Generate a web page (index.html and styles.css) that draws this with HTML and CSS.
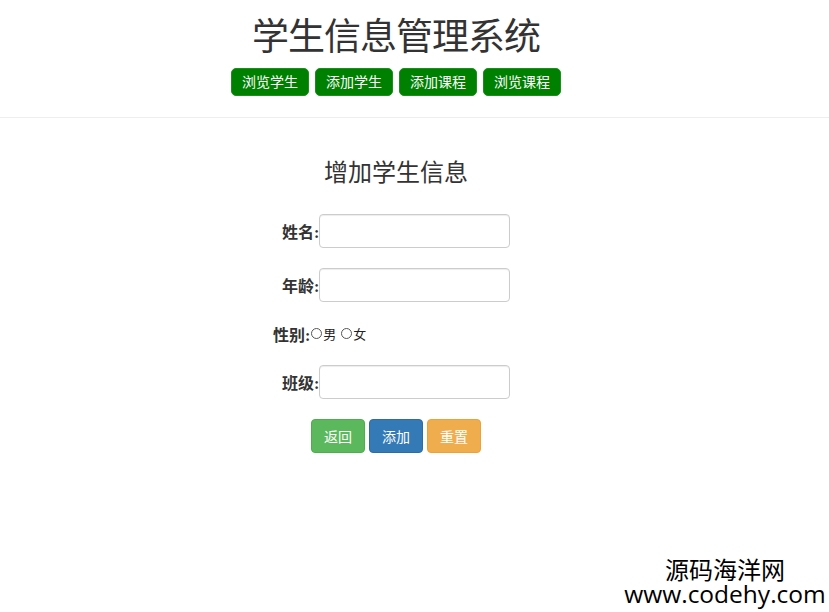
FILE: index.html
```html
<!DOCTYPE html>
<html lang="zh">
<head>
<meta charset="utf-8">
<title>学生信息管理系统</title>
<link rel="stylesheet" href="styles.css">
</head>
<body>
<header class="header">
  <div class="wrap">
    <h1 class="site-title">学生信息管理系统</h1>
    <nav class="nav">
      <a class="nav-btn" href="#">浏览学生</a>
      <a class="nav-btn" href="#">添加学生</a>
      <a class="nav-btn" href="#">添加课程</a>
      <a class="nav-btn" href="#">浏览课程</a>
    </nav>
  </div>
</header>
<main class="wrap">
  <h2 class="form-title">增加学生信息</h2>
  <form class="form">
    <div class="row row-input"><label class="lbl">姓名:</label><input class="field" type="text"></div>
    <div class="row row-input"><label class="lbl">年龄:</label><input class="field" type="text"></div>
    <div class="row row-gender"><label class="lbl">性别:</label><span class="radio"></span><span class="opt">男</span><span class="radio radio-2"></span><span class="opt">女</span></div>
    <div class="row row-input"><label class="lbl">班级:</label><input class="field" type="text"></div>
    <div class="actions">
      <button type="button" class="btn btn-green">返回</button>
      <button type="button" class="btn btn-blue">添加</button>
      <button type="button" class="btn btn-orange">重置</button>
    </div>
  </form>
</main>
<div class="watermark">
  <div class="wm-cn">源码海洋网</div>
  <div class="wm-url">www.codehy.com</div>
</div>
</body>
</html>
```
FILE: styles.css
```css
html, body {
  margin: 0;
  padding: 0;
  background: #fff;
}
body {
  font-family: "Liberation Sans", "Noto Sans CJK SC", sans-serif;
  color: #333;
  width: 829px;
  height: 612px;
  position: relative;
  overflow: hidden;
}
.wrap {
  width: 792px;
}
.header {
  border-bottom: 1px solid #eee;
  padding-bottom: 21px;
}
.site-title {
  margin: 16px 0 0;
  font-size: 37px;
  font-weight: 400;
  line-height: 44px;
  text-align: center;
  color: #333;
  letter-spacing: -1px;
}
.nav {
  display: flex;
  justify-content: center;
  gap: 6px;
  margin-top: 8px;
}
.nav-btn {
  display: block;
  width: 78px;
  height: 28px;
  line-height: 26px;
  box-sizing: border-box;
  background: #008000;
  color: #fff;
  text-decoration: none;
  font-size: 14px;
  text-align: center;
  border-radius: 5px;
  border: 1px solid #1a8f1a;
}
.form-title {
  margin: 38px 0 0;
  font-size: 24px;
  font-weight: 400;
  line-height: 34px;
  text-align: center;
}
.form {
  display: flex;
  flex-direction: column;
  padding-left: 273px;
  margin-top: 24px;
}
.row {
  display: flex;
  align-items: center;
  height: 34px;
}
.row + .row {
  margin-top: 20px;
}
.row-input {
  padding-left: 9px;
}
.lbl {
  font-family: "Liberation Serif", "Noto Sans CJK SC", serif;
  font-weight: 700;
  font-size: 16px;
  color: #333;
}
.field {
  width: 191px;
  height: 34px;
  box-sizing: border-box;
  margin: 0;
  border: 1px solid #ccc;
  border-radius: 4px;
  box-shadow: inset 0 1px 1px rgba(0,0,0,.075);
  background: #fff;
  padding: 6px 12px;
}
.row-gender {
  height: 23px;
}
.radio {
  display: inline-block;
  width: 11px;
  height: 11px;
  border: 1px solid #555;
  border-radius: 50%;
  box-sizing: border-box;
  margin: 0 1px 0 1px;
}
.radio-2 {
  margin-left: 5px;
}
.opt {
  font-size: 13px;
  color: #222;
}
.actions {
  display: flex;
  gap: 4px;
  margin: 20px 0 0 38px;
}
.btn {
  width: 54px;
  height: 34px;
  border-radius: 4px;
  border: 1px solid transparent;
  color: #fff;
  font-size: 14px;
  font-family: "Liberation Sans", "Noto Sans CJK SC", sans-serif;
  padding: 0;
}
.btn-green { background: #5cb85c; border-color: #4cae4c; }
.btn-blue { background: #337ab7; border-color: #2e6da4; }
.btn-orange { background: #f0ad4e; border-color: #eea236; }
.watermark {
  position: absolute;
  left: 620px;
  top: 556px;
  width: 210px;
  text-align: center;
  font-family: "Noto Sans CJK SC", sans-serif;
  color: #000;
}
.wm-cn {
  font-size: 24px;
  line-height: 26px;
}
.wm-url {
  font-size: 24.5px;
  line-height: 24px;
  font-family: "Open Sans", "Noto Sans", sans-serif;
}
```
